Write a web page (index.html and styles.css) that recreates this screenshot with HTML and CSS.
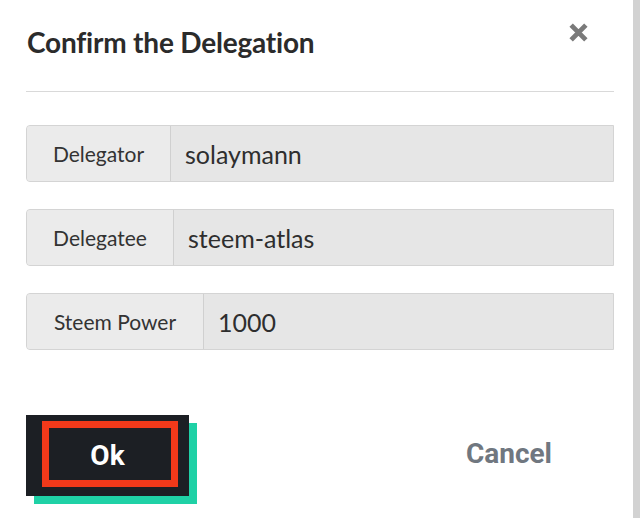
FILE: index.html
```html
<!DOCTYPE html>
<html>
<head>
<meta charset="utf-8">
<link rel="stylesheet" href="styles.css">
</head>
<body>
<div class="page">
  <div class="modal">
    <div class="header">
      <h1 class="title">Confirm the Delegation</h1>
      <button class="close" aria-label="Close">
        <svg width="21" height="21" viewBox="0 0 20 20"><path d="M3 3 L17 17 M17 3 L3 17" stroke="#7a7a7a" stroke-width="4.6" stroke-linecap="butt"/></svg>
      </button>
    </div>
    <div class="fields">
      <div class="field"><span class="label w1">Delegator</span><span class="value">solaymann</span></div>
      <div class="field"><span class="label w2">Delegatee</span><span class="value">steem-atlas</span></div>
      <div class="field"><span class="label w3">Steem Power</span><span class="value">1000</span></div>
    </div>
    <div class="actions">
      <div class="ok-wrap">
        <button class="ok">Ok</button>
        <span class="highlight"></span>
      </div>
      <button class="cancel">Cancel</button>
    </div>
  </div>
  <div class="scrollbar"></div>
</div>
</body>
</html>
```
FILE: styles.css
```css
html, body {
  margin: 0;
  padding: 0;
  background: #ffffff;
}
body {
  font-family: Lato, "Open Sans", sans-serif;
  color: #2e2e2e;
}
.page {
  display: flex;
  width: 640px;
  height: 518px;
  overflow: hidden;
}
.modal {
  width: 633px;
  flex: none;
  padding: 0 19px 0 26px;
  box-sizing: border-box;
}
.scrollbar {
  width: 7px;
  flex: none;
  background: #d2d2d2;
}
.header {
  display: flex;
  justify-content: space-between;
  align-items: flex-start;
  height: 92px;
  border-bottom: 1px solid #d9d9d9;
  box-sizing: border-box;
}
.title {
  margin: 24px 0 0 1px;
  font-size: 28px;
  font-weight: 700;
  line-height: 36px;
  color: #2b2b2b;
  letter-spacing: -0.2px;
}
.close {
  margin: 22px 25px 0 0;
  padding: 0;
  border: 0;
  background: none;
  width: 21px;
  height: 21px;
  display: block;
}
.close svg { display: block; }
.fields {
  display: flex;
  flex-direction: column;
  gap: 27px;
  padding-top: 33px;
}
.field {
  display: flex;
  height: 57px;
  border: 1px solid #d4d4d4;
  border-radius: 4px 0 0 4px;
  background: #e6e6e6;
  box-sizing: border-box;
  overflow: hidden;
}
.label {
  display: flex;
  align-items: center;
  justify-content: center;
  background: #ebebeb;
  border-right: 1px solid #d0d0d0;
  font-size: 21px;
  color: #333;
  flex: none;
}
.w1 { width: 143px; }
.w2 { width: 146px; }
.w3 { width: 176px; }
.value {
  display: flex;
  align-items: center;
  padding-left: 14px;
  font-size: 25px;
  color: #2e2e2e;
}
.actions {
  display: flex;
  justify-content: space-between;
  align-items: center;
  margin-top: 65px;
  padding-right: 62px;
}
.ok-wrap {
  position: relative;
  width: 163px;
  height: 81px;
  box-shadow: 8px 8px 0 #1fd1a6;
}
.ok {
  display: block;
  width: 163px;
  height: 81px;
  border: 0;
  background: #1c1f24;
  color: #ffffff;
  font-family: Roboto, sans-serif;
  font-weight: 700;
  font-size: 28px;
  padding: 0;
}
.highlight {
  position: absolute;
  left: 16px;
  top: 6px;
  width: 136px;
  height: 66px;
  border: 7px solid #f0391a;
  box-sizing: border-box;
  pointer-events: none;
}
.cancel {
  border: 0;
  background: none;
  padding: 0;
  font-family: Roboto, sans-serif;
  font-weight: 700;
  font-size: 28px;
  color: #707780;
  margin-bottom: 4px;
}
```
